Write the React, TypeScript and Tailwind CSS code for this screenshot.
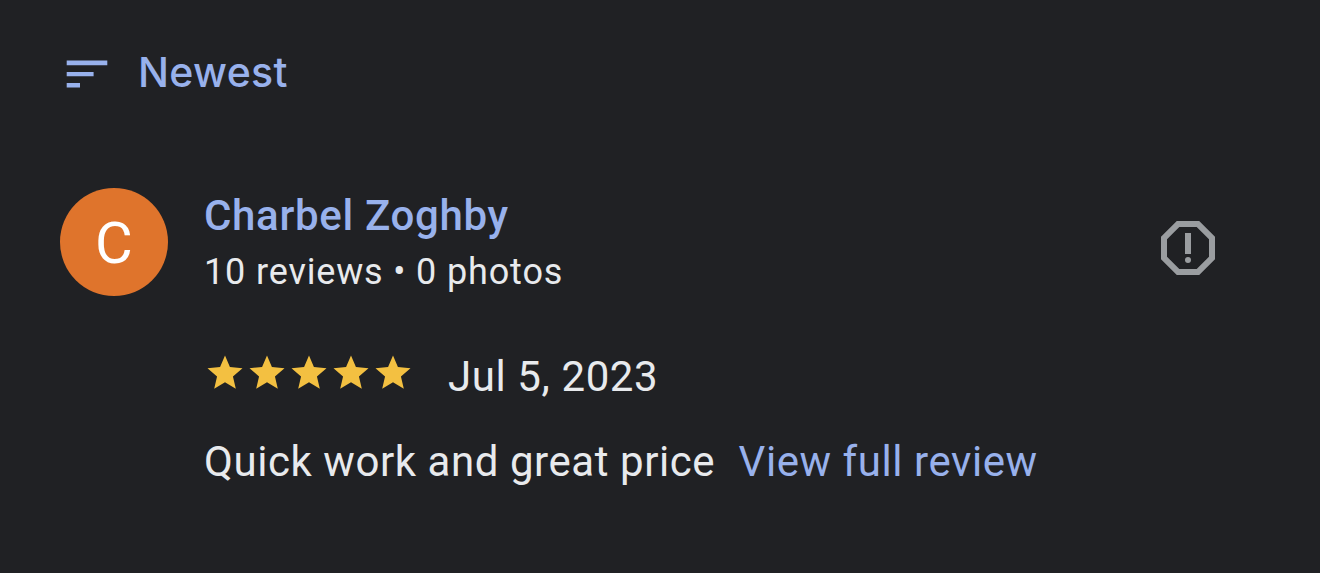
import React from 'react';

interface Review {
  author: string;
  reviewCount: number;
  photoCount: number;
  rating: number;
  date: string;
  text: string;
}

const review: Review = {
  author: 'Charbel Zoghby',
  reviewCount: 10,
  photoCount: 0,
  rating: 5,
  date: 'Jul 5, 2023',
  text: 'Quick work and great price',
};

const SortIcon = () => (
  <svg className="mt-1" width="42" height="30" viewBox="0 0 42 30" fill="currentColor">
    <path d="M.7 1.4h40.6v4.8H.7zM.7 13h26.9v4.2H.7zM.7 24h13.3v4.6H.7z" />
  </svg>
);

const StarIcon = () => (
  <svg width="42" height="42" viewBox="0 0 24 24" fill="currentColor">
    <path d="M12 17.27L18.18 21l-1.64-7.03L22 9.24l-7.19-.61L12 2 9.19 8.63 2 9.24l5.46 4.73L5.82 21z" />
  </svg>
);

const ReportIcon = () => (
  <svg width="72" height="72" viewBox="0 0 24 24" fill="currentColor">
    <path d="M15.73 3H8.27L3 8.27v7.46L8.27 21h7.46L21 15.73V8.27L15.73 3zM19 14.9L14.9 19H9.1L5 14.9V9.1L9.1 5h5.8L19 9.1v5.8z" />
    <circle cx="12" cy="16" r="1" />
    <path d="M11 7h2v7h-2z" />
  </svg>
);

const ReviewCard: React.FC<{ review: Review }> = ({ review }) => (
  <article className="mt-[90px]">
    <header className="flex items-start">
      <div className="flex h-[108px] w-[108px] shrink-0 justify-center rounded-full bg-[#df742c] pt-px text-[58px] leading-[108px] text-white">
        {review.author[0]}
      </div>
      <div className="ml-9 mt-1 flex-1 whitespace-nowrap">
        <h3 className="text-[42px] font-medium leading-[48px] tracking-[0.68px] text-[#98b1ec]">{review.author}</h3>
        <p className="mt-2 text-[36px] leading-[48px] tracking-[0.85px] text-[#e8eaed]">
          {review.reviewCount} reviews • {review.photoCount} photos
        </p>
      </div>
      <button className="mt-6 text-[#9a9da0]" aria-label="Report review">
        <ReportIcon />
      </button>
    </header>

    <div className="ml-36 mt-[52px] flex items-center whitespace-nowrap text-[42px] leading-[58px] text-[#e8eaed]">
      <div className="flex pb-2 text-[#f3c041]">
        {Array.from({ length: review.rating }, (_, i) => (
          <StarIcon key={i} />
        ))}
      </div>
      <span className="ml-[34px] tracking-[0.6px]">{review.date}</span>
    </div>

    <div className="ml-36 mt-[27px] flex whitespace-nowrap text-[42px] leading-[58px] tracking-[0.56px]">
      <p className="text-[#e8eaed]">{review.text}</p>
      <a className="ml-[23.5px] text-[#98b1ec]">View full review</a>
    </div>
  </article>
);

export default function App() {
  return (
    <main className="h-[573px] w-full overflow-hidden bg-[#202124] pl-15 pr-24 pt-[46px] font-['Roboto',sans-serif]">
      <button className="flex h-[52px] items-center pl-1.5 text-[#98b1ec]">
        <SortIcon />
        <span className="ml-[30px] pb-px font-['Inter',sans-serif] text-[41px] font-medium leading-[52px] tracking-[0.3px]">
          Newest
        </span>
      </button>
      <ReviewCard review={review} />
    </main>
  );
}
